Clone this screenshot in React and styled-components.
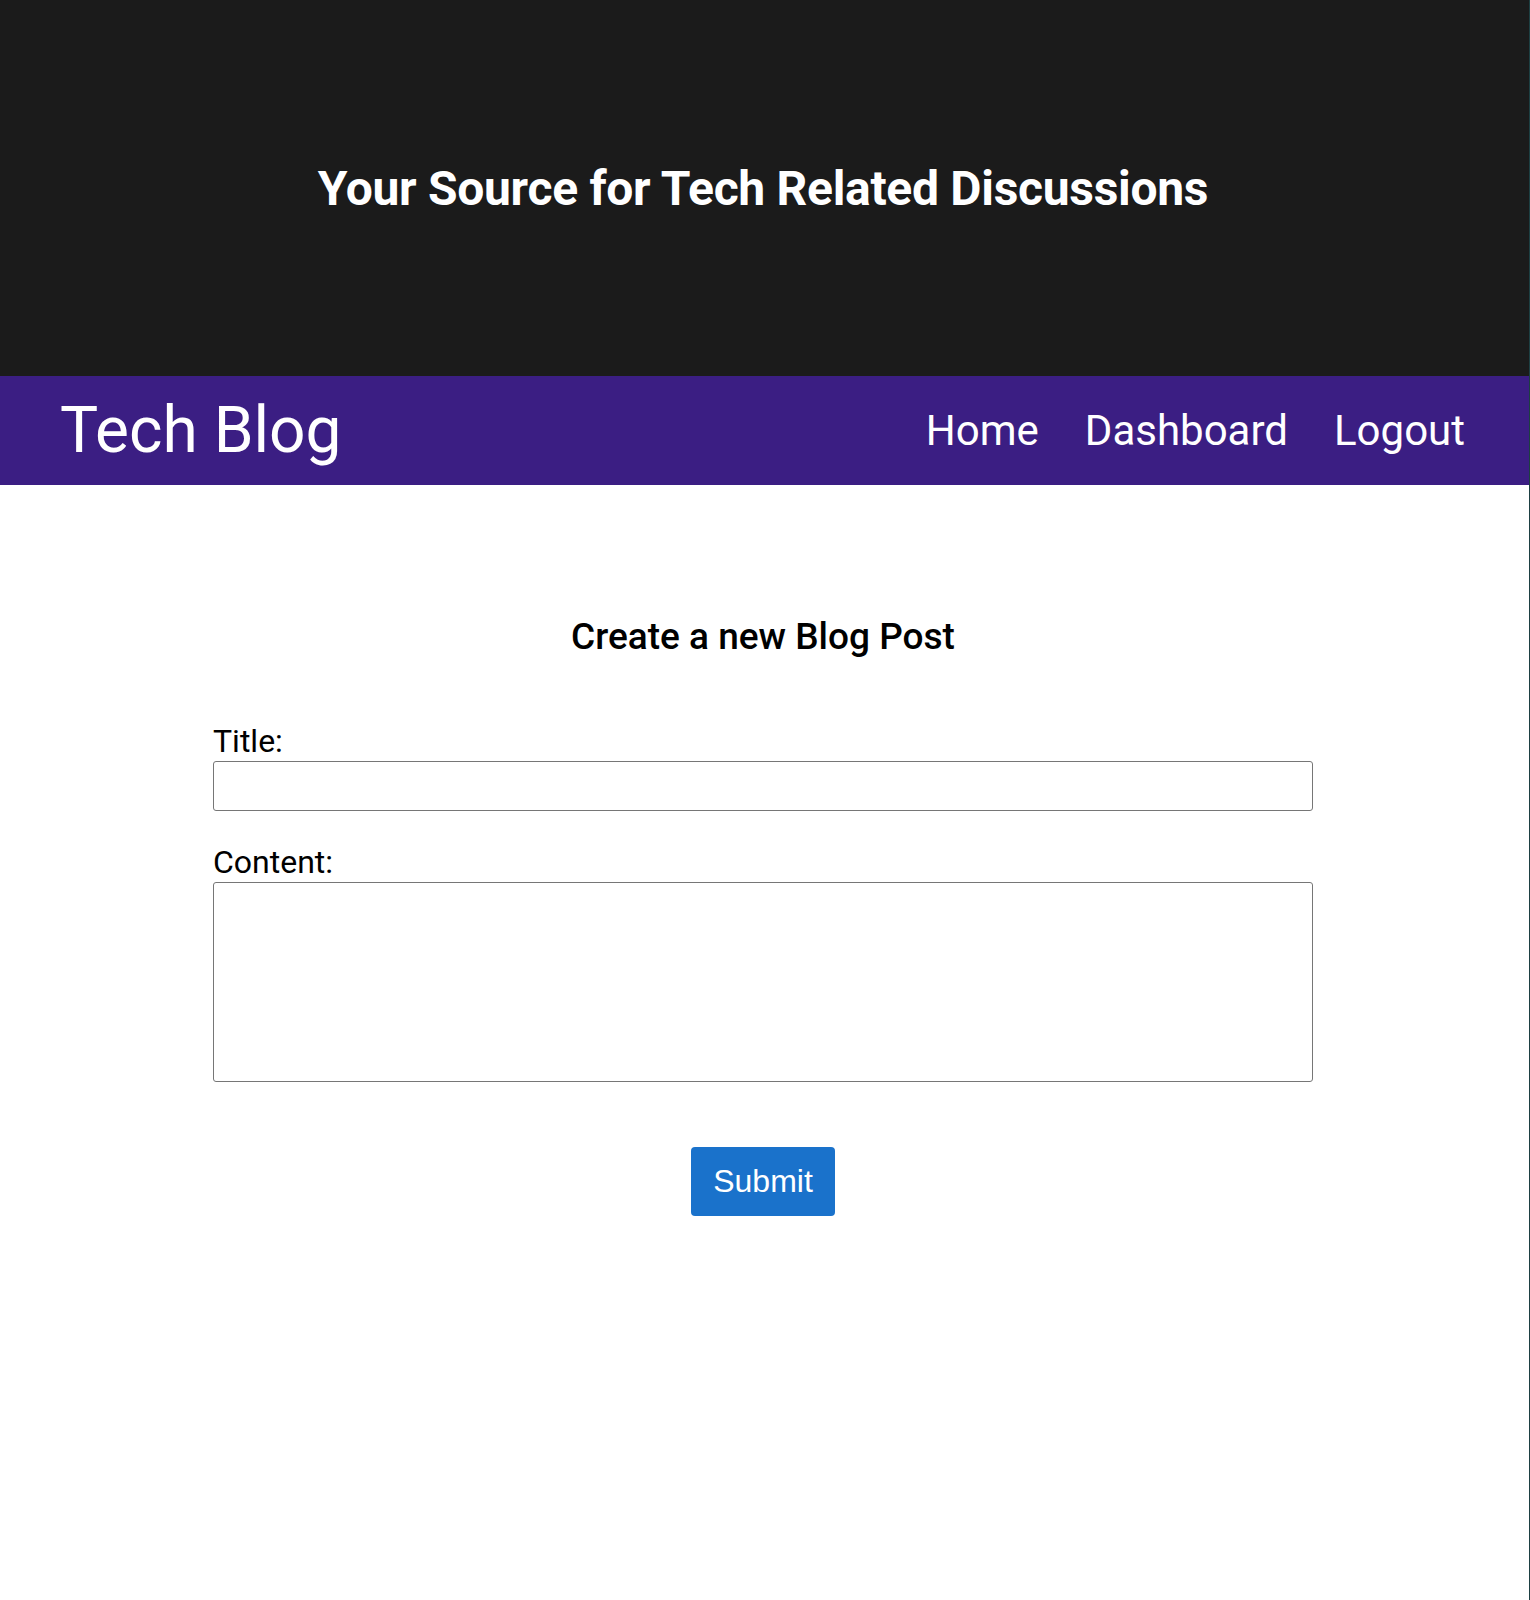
import React from "react"
import styled, { createGlobalStyle } from "styled-components"

const GlobalStyle = createGlobalStyle`
  body {
    margin: 0;
    font-family: Roboto, "Liberation Sans", sans-serif;
    background: #fff;
  }
`

const Page = styled.div`
  min-height: 1600px;
  border-right: 1px solid #1d3f42;
`

const Hero = styled.header`
  height: 376px;
  box-sizing: border-box;
  padding: 160px 3px 0 0;
  background-color: #1b1b1b;
  text-align: center;
`

const HeroTitle = styled.h1`
  margin: 0;
  color: #fff;
  font-size: 48px;
  font-weight: 700;
  letter-spacing: -0.3px;
`

const Nav = styled.nav`
  display: flex;
  align-items: center;
  justify-content: space-between;
  height: 109px;
  padding: 0 64px 0 60px;
  background-color: #3b1e83;
`

const Brand = styled.a`
  color: #fff;
  font-size: 64px;
  text-decoration: none;
`

const Links = styled.div`
  display: flex;
  gap: 46px;
`

const NavLink = styled.a`
  color: #fff;
  font-size: 42px;
  text-decoration: none;
`

const Main = styled.main`
  padding: 130px 3px 0 0;
`

const Heading = styled.h2`
  margin: 0 0 64px;
  text-align: center;
  font-size: 37px;
  font-weight: 500;
  color: #000;
`

const Form = styled.form`
  display: flex;
  flex-direction: column;
  width: 1100px;
  margin: 0 auto;
`

const Field = styled.div`
  display: flex;
  flex-direction: column;
  gap: 1px;
  margin-bottom: ${(p) => p.$gap || 32}px;
`

const Label = styled.label`
  font-size: 32px;
  color: #000;
`

const TextInput = styled.input`
  height: 50px;
  box-sizing: border-box;
  border: 1px solid #767676;
  border-radius: 3px;
  font-size: 20px;
`

const TextArea = styled.textarea`
  height: 200px;
  box-sizing: border-box;
  border: 1px solid #767676;
  border-radius: 3px;
  resize: none;
  font-size: 20px;
`

const SubmitButton = styled.button`
  align-self: center;
  padding: 16px 22px;
  border: none;
  border-radius: 4px;
  background-color: #1a72cb;
  color: #fff;
  font-family: "Liberation Sans", Arial, sans-serif;
  font-size: 32px;
`

const App = () => (
  <Page>
    <GlobalStyle />
    <Hero>
      <HeroTitle>Your Source for Tech Related Discussions</HeroTitle>
    </Hero>
    <Nav>
      <Brand href="#">Tech Blog</Brand>
      <Links>
        <NavLink href="#">Home</NavLink>
        <NavLink href="#">Dashboard</NavLink>
        <NavLink href="#">Logout</NavLink>
      </Links>
    </Nav>
    <Main>
      <Heading>Create a new Blog Post</Heading>
      <Form onSubmit={(e) => e.preventDefault()}>
        <Field>
          <Label htmlFor="title">Title:</Label>
          <TextInput id="title" type="text" />
        </Field>
        <Field $gap={65}>
          <Label htmlFor="content">Content:</Label>
          <TextArea id="content" />
        </Field>
        <SubmitButton type="submit">Submit</SubmitButton>
      </Form>
    </Main>
  </Page>
)

export default App
